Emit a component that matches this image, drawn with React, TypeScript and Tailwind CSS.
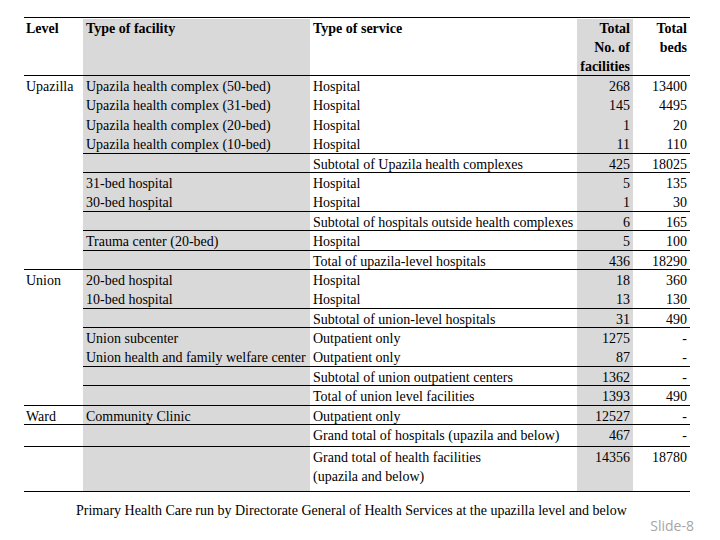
import React from "react";

type Row = {
  level?: string;
  facility?: string;
  service: React.ReactNode;
  count: string;
  beds: string;
  line?: "part" | "full";
  h?: string;
};

const rows: Row[] = [
  { level: "Upazilla", facility: "Upazila health complex (50-bed)", service: "Hospital", count: "268", beds: "13400" },
  { facility: "Upazila health complex (31-bed)", service: "Hospital", count: "145", beds: "4495" },
  { facility: "Upazila health complex (20-bed)", service: "Hospital", count: "1", beds: "20" },
  { facility: "Upazila health complex (10-bed)", service: "Hospital", count: "11", beds: "110", line: "part" },
  { service: "Subtotal of Upazila health complexes", count: "425", beds: "18025", line: "part" },
  { facility: "31-bed hospital", service: "Hospital", count: "5", beds: "135" },
  { facility: "30-bed hospital", service: "Hospital", count: "1", beds: "30", line: "part" },
  { service: "Subtotal of hospitals outside health complexes", count: "6", beds: "165", line: "part" },
  { facility: "Trauma center (20-bed)", service: "Hospital", count: "5", beds: "100", line: "part" },
  { service: "Total of upazila-level hospitals", count: "436", beds: "18290", line: "full" },
  { level: "Union", facility: "20-bed hospital", service: "Hospital", count: "18", beds: "360" },
  { facility: "10-bed hospital", service: "Hospital", count: "13", beds: "130", line: "part" },
  { service: "Subtotal of union-level hospitals", count: "31", beds: "490", line: "part" },
  { facility: "Union subcenter", service: "Outpatient only", count: "1275", beds: "-" },
  { facility: "Union health and family welfare center", service: "Outpatient only", count: "87", beds: "-", line: "part" },
  { service: "Subtotal of union outpatient centers", count: "1362", beds: "-", line: "part" },
  { service: "Total of union level facilities", count: "1393", beds: "490", line: "full" },
  { level: "Ward", facility: "Community Clinic", service: "Outpatient only", count: "12527", beds: "-", line: "full" },
  { service: "Grand total of hospitals (upazila and below)", count: "467", beds: "-", line: "full", h: "h-[21.5px]" },
  {
    service: (
      <>
        Grand total of health facilities
        <br />
        (upazila and below)
      </>
    ),
    count: "14356",
    beds: "18780",
    line: "full",
    h: "h-[45px]",
  },
];

function TableRow({ row }: { row: Row }) {
  const part = row.line ? "border-b border-black" : "";
  const full = row.line === "full" ? "border-b border-black" : "";
  return (
    <div className={`flex ${row.h ?? "h-[19.4px]"}`}>
      <div className={`w-[59px] pl-[2px] pt-[1px] ${full}`}>{row.level}</div>
      <div className={`w-[227px] bg-[#d9d9d9] pl-[3px] pt-[1px] whitespace-nowrap ${part}`}>{row.facility}</div>
      <div className={`w-[267px] pl-[3px] pt-[1px] whitespace-nowrap ${part}`}>{row.service}</div>
      <div className={`w-[56px] bg-[#d9d9d9] pr-[3px] pt-[1px] text-right ${part}`}>{row.count}</div>
      <div className={`w-[57px] pr-[3px] pt-[1px] text-right ${part}`}>{row.beds}</div>
    </div>
  );
}

export default function App() {
  return (
    <div className="w-[720px] h-[540px] bg-white text-black overflow-hidden font-['Liberation_Serif',serif] text-[14px] leading-[19px]">
      <div className="ml-[24px] mt-[17px] w-[666px]">
        <div className="flex h-[59px] border-y border-black pt-[1px] font-bold">
          <div className="w-[59px] pl-[2px]">Level</div>
          <div className="w-[227px] bg-[#d9d9d9] pl-[3px]">Type of facility</div>
          <div className="w-[267px] pl-[3px]">Type of service</div>
          <div className="w-[56px] bg-[#d9d9d9] pr-[3px] text-right whitespace-nowrap">
            Total
            <br />
            No. of
            <br />
            facilities
          </div>
          <div className="w-[57px] pr-[3px] text-right">
            Total
            <br />
            beds
          </div>
        </div>
        {rows.map((row, i) => (
          <TableRow key={i} row={row} />
        ))}
      </div>
      <p className="mt-[9px] pl-[76px] whitespace-nowrap">
        Primary Health Care run by Directorate General of Health Services at the upazilla level and below
      </p>
      <div className="-mt-[3px] pr-[26px] text-right font-['Open_Sans',sans-serif] text-[14px] leading-[18px] text-[#a6a6a6]">
        Slide-8
      </div>
    </div>
  );
}
